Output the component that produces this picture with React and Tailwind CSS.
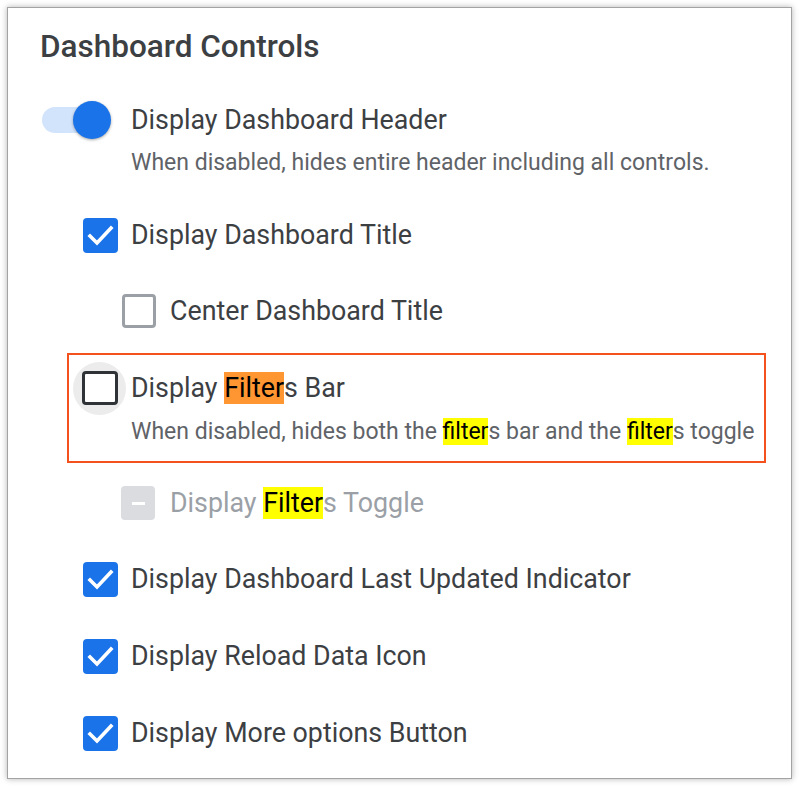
import React from 'react'

const font = { fontFamily: 'Roboto, "Liberation Sans", sans-serif' }

function Check() {
  return (
    <div className="w-[35px] h-[35px] rounded-[4px] bg-[#1a73e8] flex items-center justify-center shrink-0">
      <svg width="35" height="35" viewBox="0 0 35 35">
        <polyline points="7,18 14,25 28,10" fill="none" stroke="white" strokeWidth="3.6" strokeLinecap="square" />
      </svg>
    </div>
  )
}

function Empty({ dark }) {
  return (
    <div
      className={
        dark
          ? 'w-[36px] h-[34px] rounded-[4px] border-[3px] border-[#2f3337] bg-white shrink-0'
          : 'w-[34px] h-[34px] rounded-[4px] border-[3px] border-[#9aa0a6] bg-white shrink-0'
      }
    />
  )
}

function Mark({ children, orange }) {
  return (
    <span className={(orange ? 'bg-[#ff9632]' : 'bg-[#ffff00]') + ' text-black'}>
      {children}
    </span>
  )
}

function CheckRow({ label, className }) {
  return (
    <div className={'flex items-center h-[40px] ml-[75px] ' + className}>
      <Check />
      <span className="ml-[13px] text-[26.8px] leading-[40px] text-[#3c4043]">{label}</span>
    </div>
  )
}

export default function App() {
  return (
    <div className="w-[800px] h-[788px] bg-white pt-[7px] pl-[7px]" style={font}>
      <div className="w-[785px] h-[772px] border border-[#a3a3a3] bg-white shadow-[0_0_6px_rgba(0,0,0,0.3)] pt-[23px]">
        {/* title */}
        <h1 className="ml-[32px] h-[32px] leading-[32px] text-[31.5px] font-medium text-[#3c4043]">
          Dashboard Controls
        </h1>

        {/* header toggle */}
        <div className="flex items-center h-[40px] mt-[37px] ml-[34px]">
          <div className="relative w-[70px] h-[40px] shrink-0">
            <div className="absolute left-0 top-[7px] w-[58px] h-[26px] rounded-full bg-[#d2e3fc]" />
            <div className="absolute left-[31px] top-[1px] w-[38px] h-[38px] rounded-full bg-[#1a73e8] shadow-[0_1px_3px_rgba(0,0,0,0.35)]" />
          </div>
          <span className="ml-[19px] text-[26.8px] leading-[40px] text-[#3c4043]">Display Dashboard Header</span>
        </div>
        <p className="ml-[123px] mt-[11px] h-[24px] leading-[24px] text-[23px] text-[#5f6368]">
          When disabled, hides entire header including all controls.
        </p>

        <CheckRow label="Display Dashboard Title" className="mt-[40px]" />

        <div className="flex items-center h-[40px] mt-[36px] ml-[114px]">
          <Empty />
          <span className="ml-[14px] text-[26.8px] leading-[40px] text-[#3c4043]">Center Dashboard Title</span>
        </div>

        {/* highlighted block */}
        <div className="ml-[59px] mt-[22px] w-[699px] h-[110px] border-2 border-[#f4511e] pt-[13px]">
          <div className="flex items-center h-[40px] pl-[13px]">
            <div className="relative shrink-0">
              <div className="absolute left-[-9px] top-[-9px] w-[53px] h-[53px] rounded-full bg-[#ececec]" />
              <div className="relative">
                <Empty dark />
              </div>
            </div>
            <span className="ml-[13px] text-[26.8px] leading-[40px] text-[#3c4043]">
              Display <Mark orange>Filter</Mark>s Bar
            </span>
          </div>
          <p className="ml-[62px] mt-[12px] h-[24px] leading-[24px] text-[23px] text-[#5f6368]">
            When disabled, hides both the <Mark>filter</Mark>s bar and the <Mark>filter</Mark>s toggle
          </p>
        </div>

        <div className="flex items-center h-[40px] mt-[20px] ml-[113px]">
          <div className="w-[34px] h-[34px] rounded-[4px] bg-[#dadce0] flex items-center justify-center shrink-0">
            <div className="w-[13px] h-[3px] bg-white" />
          </div>
          <span className="ml-[15px] text-[26.8px] leading-[40px] text-[#9aa0a6]">
            Display <Mark>Filter</Mark>s Toggle
          </span>
        </div>

        <CheckRow label="Display Dashboard Last Updated Indicator" className="mt-[36px]" />
        <CheckRow label="Display Reload Data Icon" className="mt-[37px]" />
        <CheckRow label="Display More options Button" className="mt-[37px]" />
      </div>
    </div>
  )
}
